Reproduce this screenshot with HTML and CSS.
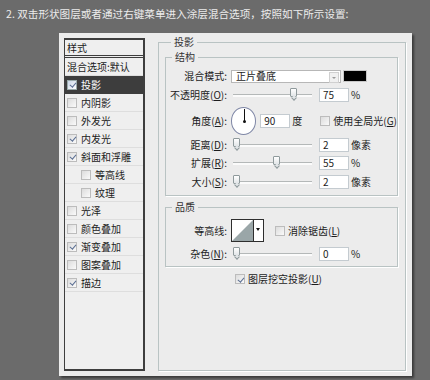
FILE: index.html
```html
<!DOCTYPE html>
<html lang="zh-CN">
<head>
    <meta charset="UTF-8">
    <title>图层样式 - 投影</title>
    <link rel="stylesheet" href="styles.css">
</head>
<body>

    <div class="caption">2. 双击形状图层或者通过右键菜单进入涂层混合选项，按照如下所示设置:</div>

    <div class="dialog">
        <!-- left: style list -->
        <div class="styles">
            <div class="styles-head">样式</div>
            <div class="row">混合选项:默认</div>
            <div class="row is-active"><span class="cb on"></span>投影</div>
            <div class="row"><span class="cb"></span>内阴影</div>
            <div class="row"><span class="cb"></span>外发光</div>
            <div class="row"><span class="cb on"></span>内发光</div>
            <div class="row"><span class="cb on"></span>斜面和浮雕</div>
            <div class="row sub"><span class="cb"></span>等高线</div>
            <div class="row sub"><span class="cb"></span>纹理</div>
            <div class="row"><span class="cb"></span>光泽</div>
            <div class="row"><span class="cb"></span>颜色叠加</div>
            <div class="row"><span class="cb on"></span>渐变叠加</div>
            <div class="row"><span class="cb"></span>图案叠加</div>
            <div class="row"><span class="cb on"></span>描边</div>
        </div>

        <!-- right: settings -->
        <div class="main">
            <fieldset class="group outer">
                <legend>投影</legend>

                <fieldset class="group inner struct">
                    <legend>结构</legend>

                    <div class="field f-mode">
                        <label>混合模式:</label>
                        <div class="select">正片叠底<span class="select-btn"></span></div>
                        <span class="swatch"></span>
                    </div>

                    <div class="field f-opacity">
                        <label>不透明度(<u>O</u>):</label>
                        <div class="slider"><span class="thumb" style="--v:.79"></span></div>
                        <span class="num">75</span><span class="unit">%</span>
                    </div>

                    <div class="field f-angle">
                        <label>角度(<u>A</u>):</label>
                        <span class="dial"></span>
                        <span class="num short">90</span><span class="unit">度</span>
                        <span class="cb"></span><span class="opt">使用全局光(<u>G</u>)</span>
                    </div>

                    <div class="field f-dist">
                        <label>距离(<u>D</u>):</label>
                        <div class="slider"><span class="thumb" style="--v:0"></span></div>
                        <span class="num">2</span><span class="unit">像素</span>
                    </div>

                    <div class="field f-spread">
                        <label>扩展(<u>R</u>):</label>
                        <div class="slider"><span class="thumb" style="--v:.55"></span></div>
                        <span class="num">55</span><span class="unit">%</span>
                    </div>

                    <div class="field f-size">
                        <label>大小(<u>S</u>):</label>
                        <div class="slider"><span class="thumb" style="--v:0"></span></div>
                        <span class="num">2</span><span class="unit">像素</span>
                    </div>
                </fieldset>

                <fieldset class="group inner quality">
                    <legend>品质</legend>

                    <div class="field f-contour">
                        <label>等高线:</label>
                        <div class="contour">
                            <svg class="curve" width="21" height="21" viewBox="0 0 21 21">
                                <rect width="21" height="21" fill="#fff"/>
                                <path d="M0 21 L21 0 L21 21 Z" fill="#9aa6a8"/>
                            </svg>
                            <span class="contour-btn"></span>
                        </div>
                        <span class="cb"></span><span class="opt">消除锯齿(<u>L</u>)</span>
                    </div>

                    <div class="field f-noise">
                        <label>杂色(<u>N</u>):</label>
                        <div class="slider"><span class="thumb" style="--v:0"></span></div>
                        <span class="num">0</span><span class="unit">%</span>
                    </div>
                </fieldset>

                <div class="knockout"><span class="cb on"></span><span>图层挖空投影(<u>U</u>)</span></div>
            </fieldset>
        </div>
    </div>

</body>
</html>
```

FILE: styles.css
```css
body {
    margin: 0;
    width: 430px; height: 380px;
    overflow: hidden;
    background: #6b6b6b;
    font-family: "Noto Sans CJK SC", "Noto Sans", sans-serif;
}

.caption {
    box-sizing: border-box;
    height: 33px;
    padding: 8px 0 0 6px;
    font-size: 10.6px; line-height: 12px;
    color: #ececec;
    white-space: nowrap;
}

.dialog {
    box-sizing: border-box;
    display: flex;
    margin-left: 59px;
    width: 353px; height: 343px;
    padding: 5px 0 0 5px;
    background: #ececec;
    box-shadow: 2px 2px 2px rgba(0, 0, 0, 0.45);
    font-size: 10px; line-height: 12px;
    color: #1c1c1c;
}

/* --- style list --- */
.styles {
    box-sizing: border-box;
    width: 81px; height: 333px;
    border: 1px solid #3e3e3e;
    border-width: 2px 2px 2px 1px;
    background: #efefef;
}
.styles-head {
    height: 15px;
    padding-left: 2px;
    display: flex; align-items: center;
    border-bottom: 3px double #3e3e3e;
}
.row {
    height: 17px;
    padding-left: 2px;
    display: flex; align-items: center; gap: 4px;
    border-bottom: 1px solid #dedede;
    white-space: nowrap;
}
.row.sub { padding-left: 16px; }
.row.is-active { background: #3d3d3d; color: #fff; border-bottom-color: #3d3d3d; }

.cb {
    box-sizing: border-box;
    flex: none;
    display: inline-block;
    width: 10px; height: 10px;
    border: 1px solid #bcbcbc;
    background: linear-gradient(135deg, #dcdcdc, #fafafa);
    position: relative;
}
.cb.on::after {
    content: "";
    position: absolute;
    left: 2.5px; top: 0.5px;
    width: 2.5px; height: 5px;
    border: solid #5b6f93;
    border-width: 0 1.5px 1.5px 0;
    transform: rotate(40deg);
}
.is-active .cb { background: linear-gradient(135deg, #c9d6e8, #ffffff); border-color: #9aa; }

/* --- settings --- */
.main {
    width: 248px;
    margin: -2px 0 0 13px;
}
.group {
    margin: 0;
    border: 1px solid #b9c3c3;
    box-shadow: 1px 1px 0 #fff;
    min-width: 0;
}
.group legend {
    margin-left: 6px;
    padding: 0 3px;
    line-height: 12px;
    color: #333;
}
.outer {
    box-sizing: border-box;
    height: 335px;
    padding: 0 7px 0 6px;
}
.inner {
    padding: 0;
    margin-top: 3px;
}
.struct { padding-bottom: 6px; }
.quality { margin-top: 5px; padding-bottom: 5px; }

.field {
    display: flex; align-items: center;
    height: 14px;
    white-space: nowrap;
}
.field label {
    flex: none;
    width: 61px;
    margin-right: 4px;
    text-align: right;
}
.f-mode { margin-top: 6px; }
.f-opacity { margin-top: 5px; }
.f-angle { margin-top: 5px; height: 28px; }
.f-dist { margin-top: 3px; }
.f-spread { margin-top: 4px; }
.f-size { margin-top: 5px; }
.f-contour { margin-top: 6px; height: 23px; }
.f-noise { margin-top: 5px; }

.select {
    box-sizing: border-box;
    position: relative;
    width: 110px; height: 13px;
    padding-left: 4px;
    border: 1px solid #b7b7b7;
    background: #fff;
    display: flex; align-items: center;
}
.select-btn {
    position: absolute;
    right: 1px; top: 1px;
    width: 8px; height: 9px;
    border: 1px solid #d0d0d0;
    background: #f0f0f0;
}
.select-btn::after {
    content: "";
    position: absolute;
    left: 2px; top: 4px;
    border: 2px solid transparent;
    border-top: 2px solid #9a9a9a;
}
.swatch {
    width: 24px; height: 12px;
    margin-left: 2px;
    background: #000;
    border: 1px solid #c8c8c8;
    box-sizing: border-box;
}

.slider {
    position: relative;
    width: 79px; height: 3px;
    margin-left: 2px;
    border-top: 1px solid #b4b8b8;
    background: #fbfbfb;
    box-sizing: border-box;
}
.thumb {
    position: absolute;
    top: -7px;
    left: calc(var(--v) * (100% - 7px));
    width: 7px; height: 9px;
    box-sizing: border-box;
    border: 1px solid #8f9a9c;
    border-radius: 1px;
    background: linear-gradient(#ffffff, #e2e6e8);
}
.thumb::after {
    content: "";
    position: absolute;
    left: 1px; bottom: -4px;
    width: 3px; height: 3px;
    border: solid #8f9a9c;
    border-width: 0 1px 1px 0;
    background: #e2e6e8;
    transform: rotate(45deg);
}

.num {
    box-sizing: border-box;
    width: 30px; height: 14px;
    margin-left: 7px;
    padding-left: 3px;
    border: 1px solid #c4cbd0;
    background: #fff;
    display: flex; align-items: center;
}
.num.short { width: 33px; margin-left: 4px; }
.unit { margin-left: 2px; }

.dial {
    box-sizing: border-box;
    position: relative;
    width: 28px; height: 28px;
    border-radius: 50%;
    border: 1.5px solid #7f87a6;
    background: #fff;
}
.dial::before {
    content: "";
    position: absolute;
    left: 11.5px; top: 1px;
    width: 1.5px; height: 12px;
    background: #111;
}
.dial::after {
    content: "";
    position: absolute;
    left: 11px; top: 11.5px;
    width: 3px; height: 3px;
    border-radius: 50%;
    background: #111;
}

.f-angle .cb { margin-left: 18px; }
.opt { margin-left: 3px; }

.contour {
    display: flex;
    box-sizing: border-box;
    width: 33px; height: 23px;
    border: 1px solid #2e2e2e;
    background: #fff;
}
.curve { display: block; }
.contour-btn {
    position: relative;
    flex: 1;
    border-left: 1px solid #2e2e2e;
}
.contour-btn::after {
    content: "";
    position: absolute;
    left: 2px; top: 8px;
    border: 2.5px solid transparent;
    border-top: 3px solid #111;
}
.f-contour .cb { margin-left: 11px; }

.knockout {
    display: flex; align-items: center; gap: 3px;
    height: 14px;
    margin: 5px 0 0 70px;
}
u { text-decoration: underline; text-underline-offset: 1px; }
```
